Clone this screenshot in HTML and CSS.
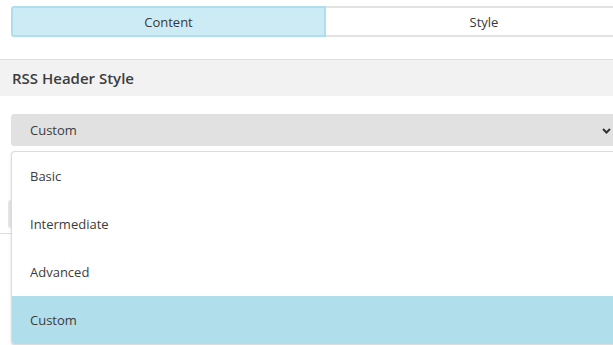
FILE: index.html
```html
<!DOCTYPE html>
<html>
<head>
<meta charset="utf-8">
<link rel="stylesheet" href="styles.css">
</head>
<body>
<div class="page">
  <div class="tabs">
    <div class="tab tab-active">Content</div>
    <div class="tab tab-style">Style</div>
  </div>
  <div class="section-head">RSS Header Style</div>
  <div class="field">
    <div class="select">
      <span class="select-value">Custom</span>
      <svg class="chevron" width="9" height="6" viewBox="0 0 9 6"><path d="M1 1 L4.5 4.5 L8 1" fill="none" stroke="#333" stroke-width="2"/></svg>
    </div>
    <div class="under">
      <div class="ghost-btn"></div>
    </div>
    <ul class="dropdown">
      <li class="option">Basic</li>
      <li class="option">Intermediate</li>
      <li class="option">Advanced</li>
      <li class="option option-selected">Custom</li>
    </ul>
  </div>
</div>
</body>
</html>
```

FILE: styles.css
```css
html, body {
  margin: 0;
  padding: 0;
  overflow: hidden;
  background: #ffffff;
}
body {
  font-family: "Open Sans", "Noto Sans", sans-serif;
  color: #444444;
}
.page {
  width: 613px;
  height: 345px;
  position: relative;
  overflow: hidden;
}
.tabs {
  display: flex;
  margin: 6px 0 0 11px;
  height: 31px;
}
.tab {
  display: flex;
  align-items: center;
  justify-content: center;
  font-size: 13px;
  color: #383838;
  background: #ffffff;
  border-top: 2px solid #e2e2e2;
  border-bottom: 2px solid #e2e2e2;
  box-sizing: border-box;
}
.tab-active {
  width: 315px;
  background: #cdebf4;
  border: 2px solid #aedeeb;
  border-radius: 3px 0 0 3px;
}
.tab-style {
  flex: 1;
  padding-left: 29px;
}
.section-head {
  margin-top: 22px;
  height: 37px;
  box-sizing: border-box;
  border-top: 1px solid #dedede;
  background: #f2f2f2;
  display: flex;
  align-items: center;
  padding-left: 12px;
  font-size: 15px;
  font-weight: 600;
  color: #3d3d3d;
}
.field {
  position: relative;
  margin-top: 18px;
}
.select {
  margin-left: 11px;
  height: 32px;
  background: #e1e1e1;
  border-radius: 3px 0 0 3px;
  display: flex;
  align-items: center;
  padding-left: 19px;
  font-size: 13px;
  color: #3c3c3c;
  position: relative;
}
.chevron {
  position: absolute;
  left: 591px;
  top: 14px;
}
.under {
  margin-top: 54px;
  height: 33px;
  border-bottom: 1px solid #dddddd;
  width: 40px;
}
.ghost-btn {
  margin-left: 8px;
  width: 20px;
  height: 28px;
  background: #e6e6e6;
  border-radius: 3px;
}
.dropdown {
  position: absolute;
  top: 37px;
  left: 11px;
  right: 0;
  margin: 0;
  padding: 0;
  list-style: none;
  background: #ffffff;
  border: 1px solid #dcdcdc;
  border-right: none;
  border-radius: 4px 0 0 4px;
  box-shadow: 0 1px 3px rgba(0,0,0,0.12);
  overflow: hidden;
}
.option {
  height: 48px;
  display: flex;
  align-items: center;
  padding-left: 18px;
  font-size: 13px;
  color: #3c3c3c;
}
.option-selected {
  background: #b1deeb;
}
```
